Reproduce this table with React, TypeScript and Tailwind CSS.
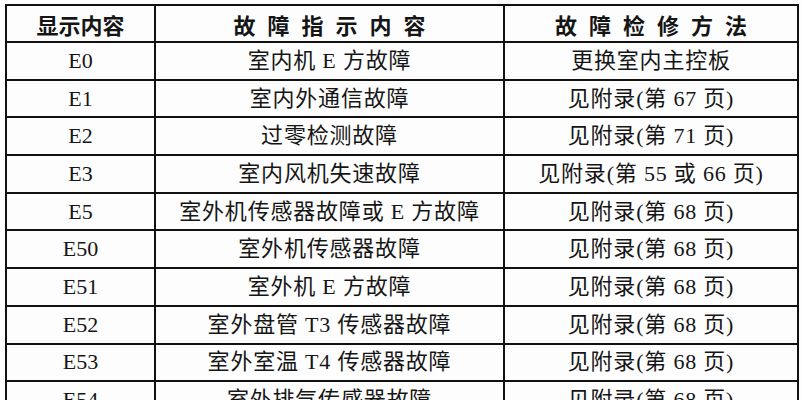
import React from 'react';

interface FaultRow {
  code: string;
  fault: string;
  fix: string;
}

const rows: FaultRow[] = [
  { code: 'E0', fault: '室内机 E 方故障', fix: '更换室内主控板' },
  { code: 'E1', fault: '室内外通信故障', fix: '见附录(第 67 页)' },
  { code: 'E2', fault: '过零检测故障', fix: '见附录(第 71 页)' },
  { code: 'E3', fault: '室内风机失速故障', fix: '见附录(第 55 或 66 页)' },
  { code: 'E5', fault: '室外机传感器故障或 E 方故障', fix: '见附录(第 68 页)' },
  { code: 'E50', fault: '室外机传感器故障', fix: '见附录(第 68 页)' },
  { code: 'E51', fault: '室外机 E 方故障', fix: '见附录(第 68 页)' },
  { code: 'E52', fault: '室外盘管 T3 传感器故障', fix: '见附录(第 68 页)' },
  { code: 'E53', fault: '室外室温 T4 传感器故障', fix: '见附录(第 68 页)' },
  { code: 'E54', fault: '室外排气传感器故障', fix: '见附录(第 68 页)' },
];

const bodyFont = {
  fontFamily: '"Liberation Serif", "Noto Sans CJK SC", serif',
};

export default function App() {
  return (
    <div className="w-[802px] h-[400px] overflow-hidden bg-[#fdfdfd] pt-[4px] pl-[5px]">
      <table
        className="table-fixed border-collapse border-2 border-[#111] text-[#151515]"
        style={{ width: 792 }}
      >
        <colgroup>
          <col className="w-[149px]" />
          <col className="w-[349px]" />
          <col className="w-[294px]" />
        </colgroup>
        <thead>
          <tr className="h-[37px]">
            <th className="border-2 border-[#111] p-0 text-[22px] leading-none font-bold font-['Noto_Sans_CJK_SC',sans-serif]">
              显示内容
            </th>
            <th className="border-2 border-[#111] p-0 pl-[12px] text-[22px] leading-none font-bold tracking-[12px] font-['Noto_Sans_CJK_SC',sans-serif]">
              故障指示内容
            </th>
            <th className="border-2 border-[#111] p-0 pl-[12px] text-[22px] leading-none font-bold tracking-[12px] font-['Noto_Sans_CJK_SC',sans-serif]">
              故障检修方法
            </th>
          </tr>
        </thead>
        <tbody style={bodyFont}>
          {rows.map((row) => (
            <tr key={row.code} className="h-[37.7px]">
              <td className="border-2 border-[#111] p-0 text-center text-[22px] leading-none">
                {row.code}
              </td>
              <td className="border-2 border-[#111] p-0 text-center text-[22px] leading-none tracking-[0.8px]">
                {row.fault}
              </td>
              <td className="border-2 border-[#111] p-0 text-center text-[22px] leading-none tracking-[0.8px]">
                {row.fix}
              </td>
            </tr>
          ))}
        </tbody>
      </table>
    </div>
  );
}
